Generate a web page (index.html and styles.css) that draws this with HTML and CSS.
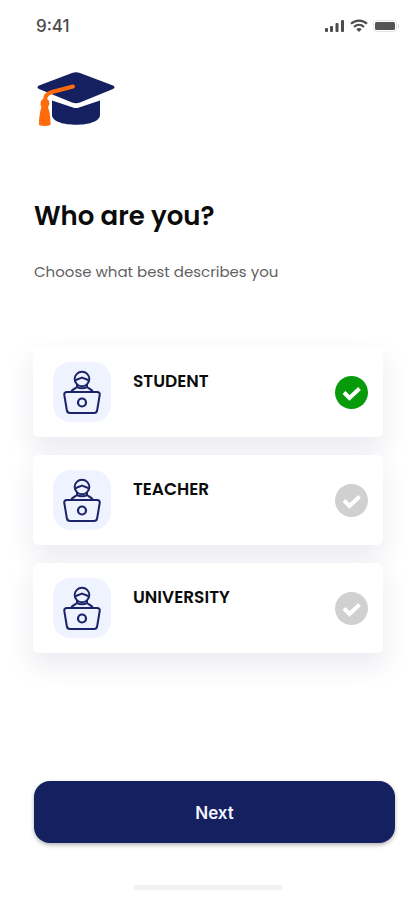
FILE: index.html
```html
<!DOCTYPE html>
<html lang="en">
<head>
  <meta charset="utf-8">
  <meta name="viewport" content="width=device-width, initial-scale=1">
  <title>Who are you?</title>
  <link rel="stylesheet" href="styles.css">
</head>
<body>
  <svg class="sprite" aria-hidden="true">
    <symbol id="person" viewBox="0 0 38 44">
      <g fill="none" stroke="#1b2468" stroke-width="2" stroke-linecap="round" stroke-linejoin="round">
        <circle cx="19" cy="9" r="7.3"/>
        <path d="M12.500 10.500c1.500-2 4-1.500 6.500-3 2.500 1.500 5 1 6.500 3"/>
        <path d="M14 15v2c-1 1.500-5 2-6 5M24 15v2c1 1.500 5 2 6 5M14 17c2.500 1.800 7.500 1.800 10 0"/>
        <path d="M4 22h30c2 0 3 1 2.700 3l-2.500 15c-.3 2-1.200 3-3.200 3H7c-2 0-2.900-1-3.200-3L1.300 25c-.3-2 .7-3 2.700-3z"/>
        <circle cx="19" cy="32.500" r="4" stroke-width="2.200"/>
      </g>
    </symbol>
    <symbol id="check" viewBox="0 0 33 33">
      <path d="M9 16.500l5.500 5.500L24.500 12.500" fill="none" stroke="#fff" stroke-width="4"/>
    </symbol>
  </svg>

  <header class="status">
    <span class="time">9:41</span>
    <svg class="signals" viewBox="0 0 74 14" aria-hidden="true">
      <g fill="#4c4c4c">
        <rect x="0" y="9" width="3" height="4" rx="1"/>
        <rect x="5" y="7" width="3" height="6" rx="1"/>
        <rect x="10.500" y="4" width="3" height="9" rx="1"/>
        <rect x="16" y="1" width="3" height="12" rx="1"/>
      </g>
      <g fill="none" stroke="#4c4c4c" stroke-width="2.200">
        <path d="M26 4.800c4.500-4.300 11.500-4.300 16 0"/>
        <path d="M29 8c3-2.800 7-2.800 10 0"/>
      </g>
      <path d="M31.300 10.200c1.800-1.500 3.600-1.500 5.400 0L34 13z" fill="#4c4c4c"/>
      <rect x="48.500" y="1.500" width="23" height="11" rx="3" fill="#fff" stroke="#e4e4e4"/>
      <rect x="50" y="3" width="20" height="8" rx="1.500" fill="#555"/>
      <path d="M73 5v4c1-.5 1-3.500 0-4z" fill="#bbb"/>
    </svg>
  </header>

  <main class="page">
    <svg class="logo" viewBox="0 0 78 54" aria-hidden="true">
      <path d="M15 28.500L36 35.500q3 1 6 0L63 28.500V43c0 13-48 13-48 0z" fill="#14205f"/>
      <path d="M35 1q4-1.600 8 0l33 12.500q3 1.500 0 3.500L43 30.500q-4 1.500-8 0L2 17q-3-2 0-3.500z" fill="#14205f"/>
      <path d="M9 30v-3l4-4.500" fill="none" stroke="#fff" stroke-width="7"/>
      <path d="M36 14.500L15 20q-7 2-7 8v3" fill="none" stroke="#ff6a0b" stroke-width="4" stroke-linecap="round"/>
      <path d="M4.500 28q3.500-3 7 0 2 4-.5 7 2.500 7 2.500 18-5.500 2-11.500 0 0-11 2.500-18Q2.500 32 4.500 28z" fill="#ff6a0b"/>
    </svg>

    <h1 class="title">Who are you?</h1>
    <p class="subtitle">Choose what best describes you</p>

    <form class="form">
      <div class="options" role="radiogroup" aria-label="Who are you?">
        <label class="option">
          <span class="tile"><svg class="person" aria-hidden="true"><use href="#person"/></svg></span>
          <span class="name">STUDENT</span>
          <span class="choice"><input type="radio" name="role" value="student" checked><svg class="tick" aria-hidden="true"><use href="#check"/></svg></span>
        </label>
        <label class="option">
          <span class="tile"><svg class="person" aria-hidden="true"><use href="#person"/></svg></span>
          <span class="name">TEACHER</span>
          <span class="choice"><input type="radio" name="role" value="teacher"><svg class="tick" aria-hidden="true"><use href="#check"/></svg></span>
        </label>
        <label class="option">
          <span class="tile"><svg class="person" aria-hidden="true"><use href="#person"/></svg></span>
          <span class="name">UNIVERSITY</span>
          <span class="choice"><input type="radio" name="role" value="university"><svg class="tick" aria-hidden="true"><use href="#check"/></svg></span>
        </label>
      </div>
      <button class="next" type="button">Next</button>
    </form>
  </main>
  <div class="home-bar"></div>
</body>
</html>
```
FILE: styles.css
```css
* {
  box-sizing: border-box;
}

body {
  margin: 0;
  background: #fff;
  color: #0b0b0b;
  font-family: Poppins, Inter, sans-serif;
}

.sprite {
  position: absolute;
  width: 0;
  height: 0;
}

.status {
  display: flex;
  align-items: center;
  justify-content: space-between;
  padding: 16px 16px 0 36px;
}

.time {
  color: #4c4c4c;
  font-family: Inter, sans-serif;
  font-size: 17px;
  font-weight: 500;
  line-height: 20px;
}

.signals {
  width: 74px;
  height: 14px;
}

.page {
  padding: 36px 20px 0 34px;
}

.logo {
  display: block;
  width: 78px;
  height: 54px;
  margin-left: 3px;
}

.title {
  margin: 72px 0 0;
  font-size: 26px;
  font-weight: 600;
  line-height: 36px;
}

.subtitle {
  margin: 28px 0 0;
  color: #626262;
  font-size: 15px;
  font-weight: 400;
  line-height: 20px;
}

.options {
  display: grid;
  gap: 18px;
  margin: 65px 12px 0 -1px;
}

.option {
  display: flex;
  align-items: center;
  gap: 22px;
  padding: 15px 15px 15px 20px;
  border-radius: 6px;
  background: #fff;
  box-shadow: 0 12px 28px rgba(35, 45, 110, 0.1);
  cursor: pointer;
}

.tile {
  display: grid;
  place-items: center;
  width: 58px;
  height: 60px;
  border-radius: 18px;
  background: #eff2ff;
}

.person {
  width: 38px;
  height: 44px;
}

.name {
  flex: 1;
  align-self: flex-start;
  margin-top: 9px;
  font-size: 17px;
  font-weight: 600;
  line-height: 20px;
}

.choice {
  display: grid;
}

.choice input,
.tick {
  grid-area: 1 / 1;
  width: 33px;
  height: 33px;
}

.choice input {
  appearance: none;
  margin: 0;
  border-radius: 50%;
  background: #d0d0d0;
}

.choice input:checked {
  background: #079b0b;
}

.tick {
  z-index: 1;
  pointer-events: none;
}

.next {
  display: block;
  width: 100%;
  margin-top: 128px;
  padding: 21px 20px 19px;
  border: 0;
  border-radius: 16px;
  background: #14205f;
  box-shadow: 0 2px 4px rgba(0, 0, 0, 0.3);
  color: #f4f5ff;
  font-family: Inter, sans-serif;
  font-size: 17px;
  font-weight: 600;
  line-height: 22px;
}

.home-bar {
  width: 148px;
  height: 5px;
  margin: 42px auto 0;
  background: #f2f2f2;
}
```
